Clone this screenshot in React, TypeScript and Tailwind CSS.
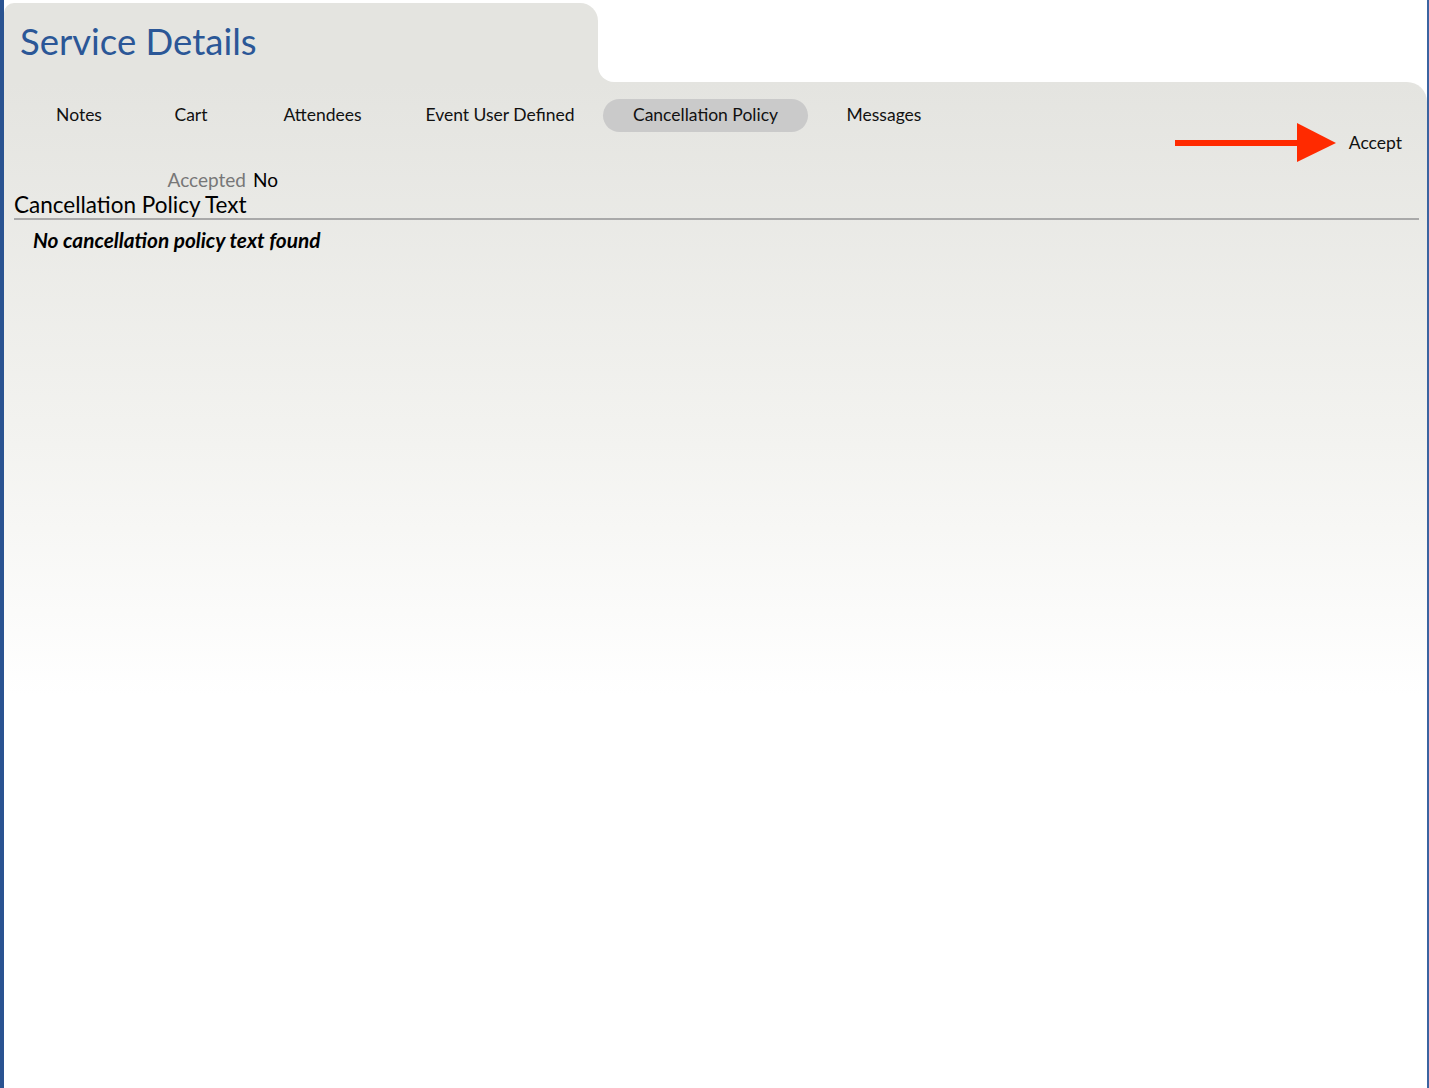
import React from "react";

const tabs = [
  { label: "Notes", cls: "ml-[22px] w-[106px]" },
  { label: "Cart", cls: "w-[118px]" },
  { label: "Attendees", cls: "w-[145px]" },
  { label: "Event User Defined", cls: "ml-[2px] w-[206px]" },
  { label: "Cancellation Policy", cls: "w-[205px]", active: true },
  { label: "Messages", cls: "w-[152px]" },
];

const Arrow = () => (
  <svg width="162" height="40" viewBox="0 0 162 40" className="block">
    <rect x="0" y="17" width="125" height="6" fill="#ff2a00" />
    <polygon points="122,0 161,20 122,39" fill="#ff2a00" />
  </svg>
);

export default function App() {
  return (
    <div
      className="h-[1088px] w-full bg-white border-l-4 border-l-[#2a5391] border-r-2 border-r-[#3b64a0] flex flex-col overflow-hidden"
      style={{ fontFamily: "Lato, 'Open Sans', sans-serif" }}
    >
      {/* header row: title tab + white gap */}
      <div className="flex h-[82px] shrink-0">
        <div className="mt-[3px] w-[594px] bg-[#e4e4e0] rounded-tl-[10px] rounded-tr-[18px] pl-4 pt-[17px]">
          <h1 className="text-[36.5px] leading-[42px] text-[#2b5797]">Service Details</h1>
        </div>
        <div className="flex-1 bg-[#e4e4e0]">
          <div className="h-full bg-white rounded-bl-[16px]" />
        </div>
      </div>

      {/* main panel */}
      <div className="flex-1 rounded-tr-[20px] bg-linear-to-b from-[#e4e4e0] from-0% via-[#f3f3f0] via-[36%] to-white to-[61%]">
        <div className="flex items-center pt-[17px]">
          {tabs.map((t) => (
            <div
              key={t.label}
              className={`${t.cls} h-[33px] flex items-center justify-center text-[17.5px] text-[#111] rounded-full whitespace-nowrap ${
                t.active ? "bg-[#cacaca]" : ""
              }`}
            >
              {t.label}
            </div>
          ))}
        </div>

        <div className="flex items-center justify-end pr-[25px] -mt-[9px]">
          <Arrow />
          <span className="ml-[12px] text-[17.5px] text-[#111]">Accept</span>
        </div>

        <div className="flex items-baseline mt-[5px] text-[19px] leading-[24px]">
          <span className="w-[242px] text-right text-[#777]">Accepted</span>
          <span className="ml-[7px] text-black">No</span>
        </div>

        <div className="ml-[10px] mr-[8px] border-b-2 border-[#a9a9a9] text-[22.5px] leading-[26px] text-black">
          Cancellation Policy Text
        </div>

        <p className="ml-[29px] mt-[4px] text-[20.8px] font-bold italic text-black">
          No cancellation policy text found
        </p>
      </div>
    </div>
  );
}
